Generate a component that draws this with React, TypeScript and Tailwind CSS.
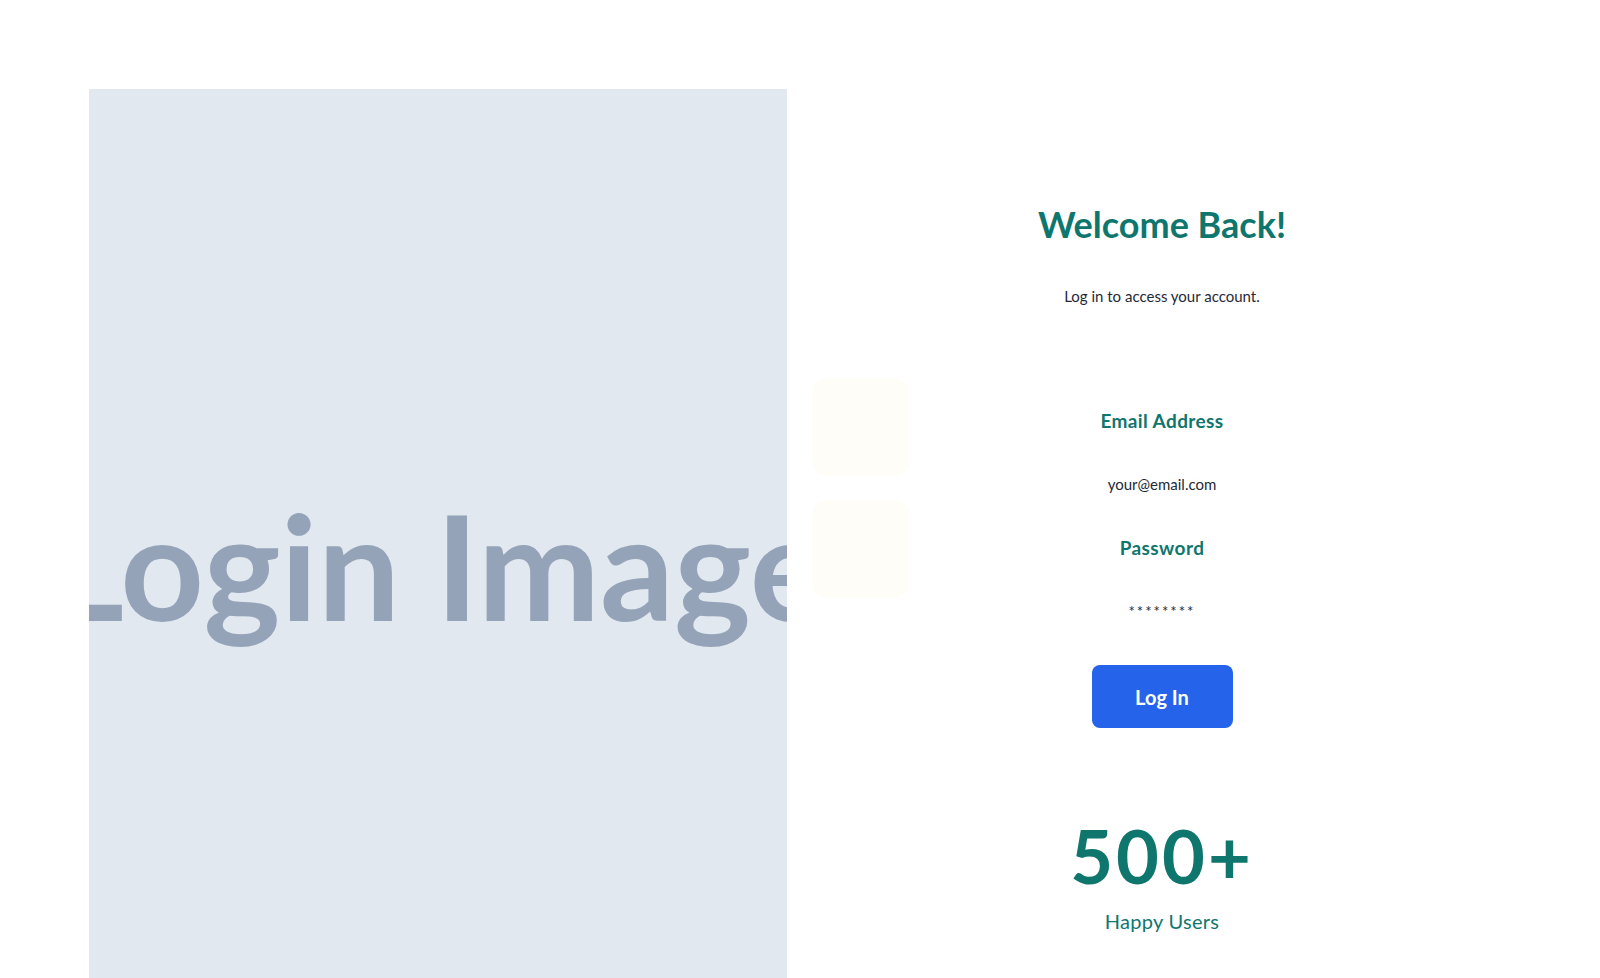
export default function App() {
  return (
    <div className="min-h-screen bg-white font-['Lato',sans-serif]">
      <div className="flex pt-[89px] pl-[89px]">
        {/* Image placeholder */}
        <div className="flex h-[952px] w-[698px] shrink-0 items-center justify-center overflow-hidden bg-[#e2e8f0]">
          <span className="whitespace-nowrap text-[146px] font-bold leading-none text-[#94a3b8]">
            Login Image
          </span>
        </div>

        {/* Form side */}
        <div className="relative flex h-[952px] w-[750px] shrink-0 flex-col items-center pt-[115px]">
          <div className="absolute left-[25px] top-[289px] size-[98px] rounded-2xl bg-[#fefdf7]" />
          <div className="absolute left-[25px] top-[411px] size-[98px] rounded-2xl bg-[#fefdf7]" />

          <h1 className="text-4xl font-bold text-[#0f766e]">Welcome Back!</h1>
          <p className="mt-10 text-[15px] leading-6 text-[#1f2937]">Log in to access your account.</p>

          <form className="mt-[99px] flex flex-col items-center">
            <label htmlFor="email" className="text-[19px] font-bold leading-7 tracking-[0.4px] text-[#0f766e]">
              Email Address
            </label>
            <input
              id="email"
              type="email"
              readOnly
              defaultValue="your@email.com"
              className="mt-[39px] h-5 w-[260px] bg-transparent text-center text-[15px] leading-5 text-[#1f2937] outline-none"
            />
            <label htmlFor="password" className="mt-10 text-[19px] font-bold leading-7 tracking-[0.4px] text-[#0f766e]">
              Password
            </label>
            <input
              id="password"
              type="text"
              readOnly
              defaultValue="********"
              className="mt-[39px] h-5 w-[260px] bg-transparent text-center text-[15px] leading-5 tracking-[2px] text-[#1f2937] outline-none"
            />
            <button
              type="button"
              className="mt-[44px] h-[63px] w-[141px] rounded-lg bg-[#2563eb] text-xl font-bold text-white"
            >
              Log In
            </button>
          </form>

          <div className="mt-[91px] flex flex-col items-center">
            <span className="text-[74px] font-bold leading-none tracking-[3px] text-[#0f766e]">500+</span>
            <span className="mt-[14px] text-xl leading-7 tracking-[0.3px] text-[#0f766e]">Happy Users</span>
          </div>
        </div>
      </div>
    </div>
  );
}
